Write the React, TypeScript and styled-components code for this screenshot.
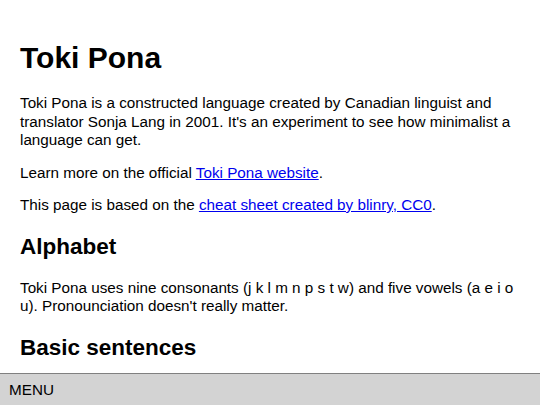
import React from 'react';
import styled, { createGlobalStyle } from 'styled-components';

const GlobalStyle = createGlobalStyle`
  html, body {
    margin: 0;
    padding: 0;
    background: #ffffff;
  }
  body {
    font-family: "Liberation Sans", Arial, sans-serif;
    font-size: 15.25px;
    color: #000000;
  }
`;

const Page = styled.main`
  padding: 21px 20px 48px 20px;
`;

const Title = styled.h1`
  font-size: 30px;
  font-weight: bold;
  margin: 20px 0 19px 0;
`;

const Heading = styled.h2`
  font-size: 22.5px;
  font-weight: bold;
  margin: 19px 0 19px 0;
`;

const Para = styled.p`
  margin: 14px 0;
  line-height: 18.5px;
`;

const Link = styled.a`
  color: #0000ee;
  text-decoration: underline;
`;

const MenuBar = styled.nav`
  position: fixed;
  left: 0;
  right: 0;
  bottom: 0;
  height: 31px;
  background: #d3d3d3;
  border-top: 1px solid #808080;
  display: flex;
  align-items: center;
  padding: 0 9px;
  font-size: 15.25px;
`;

const App: React.FC = () => {
  return (
    <>
      <GlobalStyle />
      <Page>
        <Title>Toki Pona</Title>
        <Para>
          Toki Pona is a constructed language created by Canadian linguist and
          translator Sonja Lang in 2001. It's an experiment to see how
          minimalist a language can get.
        </Para>
        <Para>
          Learn more on the official <Link href="#">Toki Pona website</Link>.
        </Para>
        <Para>
          This page is based on the{' '}
          <Link href="#">cheat sheet created by blinry, CC0</Link>.
        </Para>
        <Heading>Alphabet</Heading>
        <Para>
          Toki Pona uses nine consonants (j k l m n p s t w) and five vowels (a
          e i o u). Pronounciation doesn't really matter.
        </Para>
        <Heading>Basic sentences</Heading>
      </Page>
      <MenuBar>MENU</MenuBar>
    </>
  );
};

export default App;
